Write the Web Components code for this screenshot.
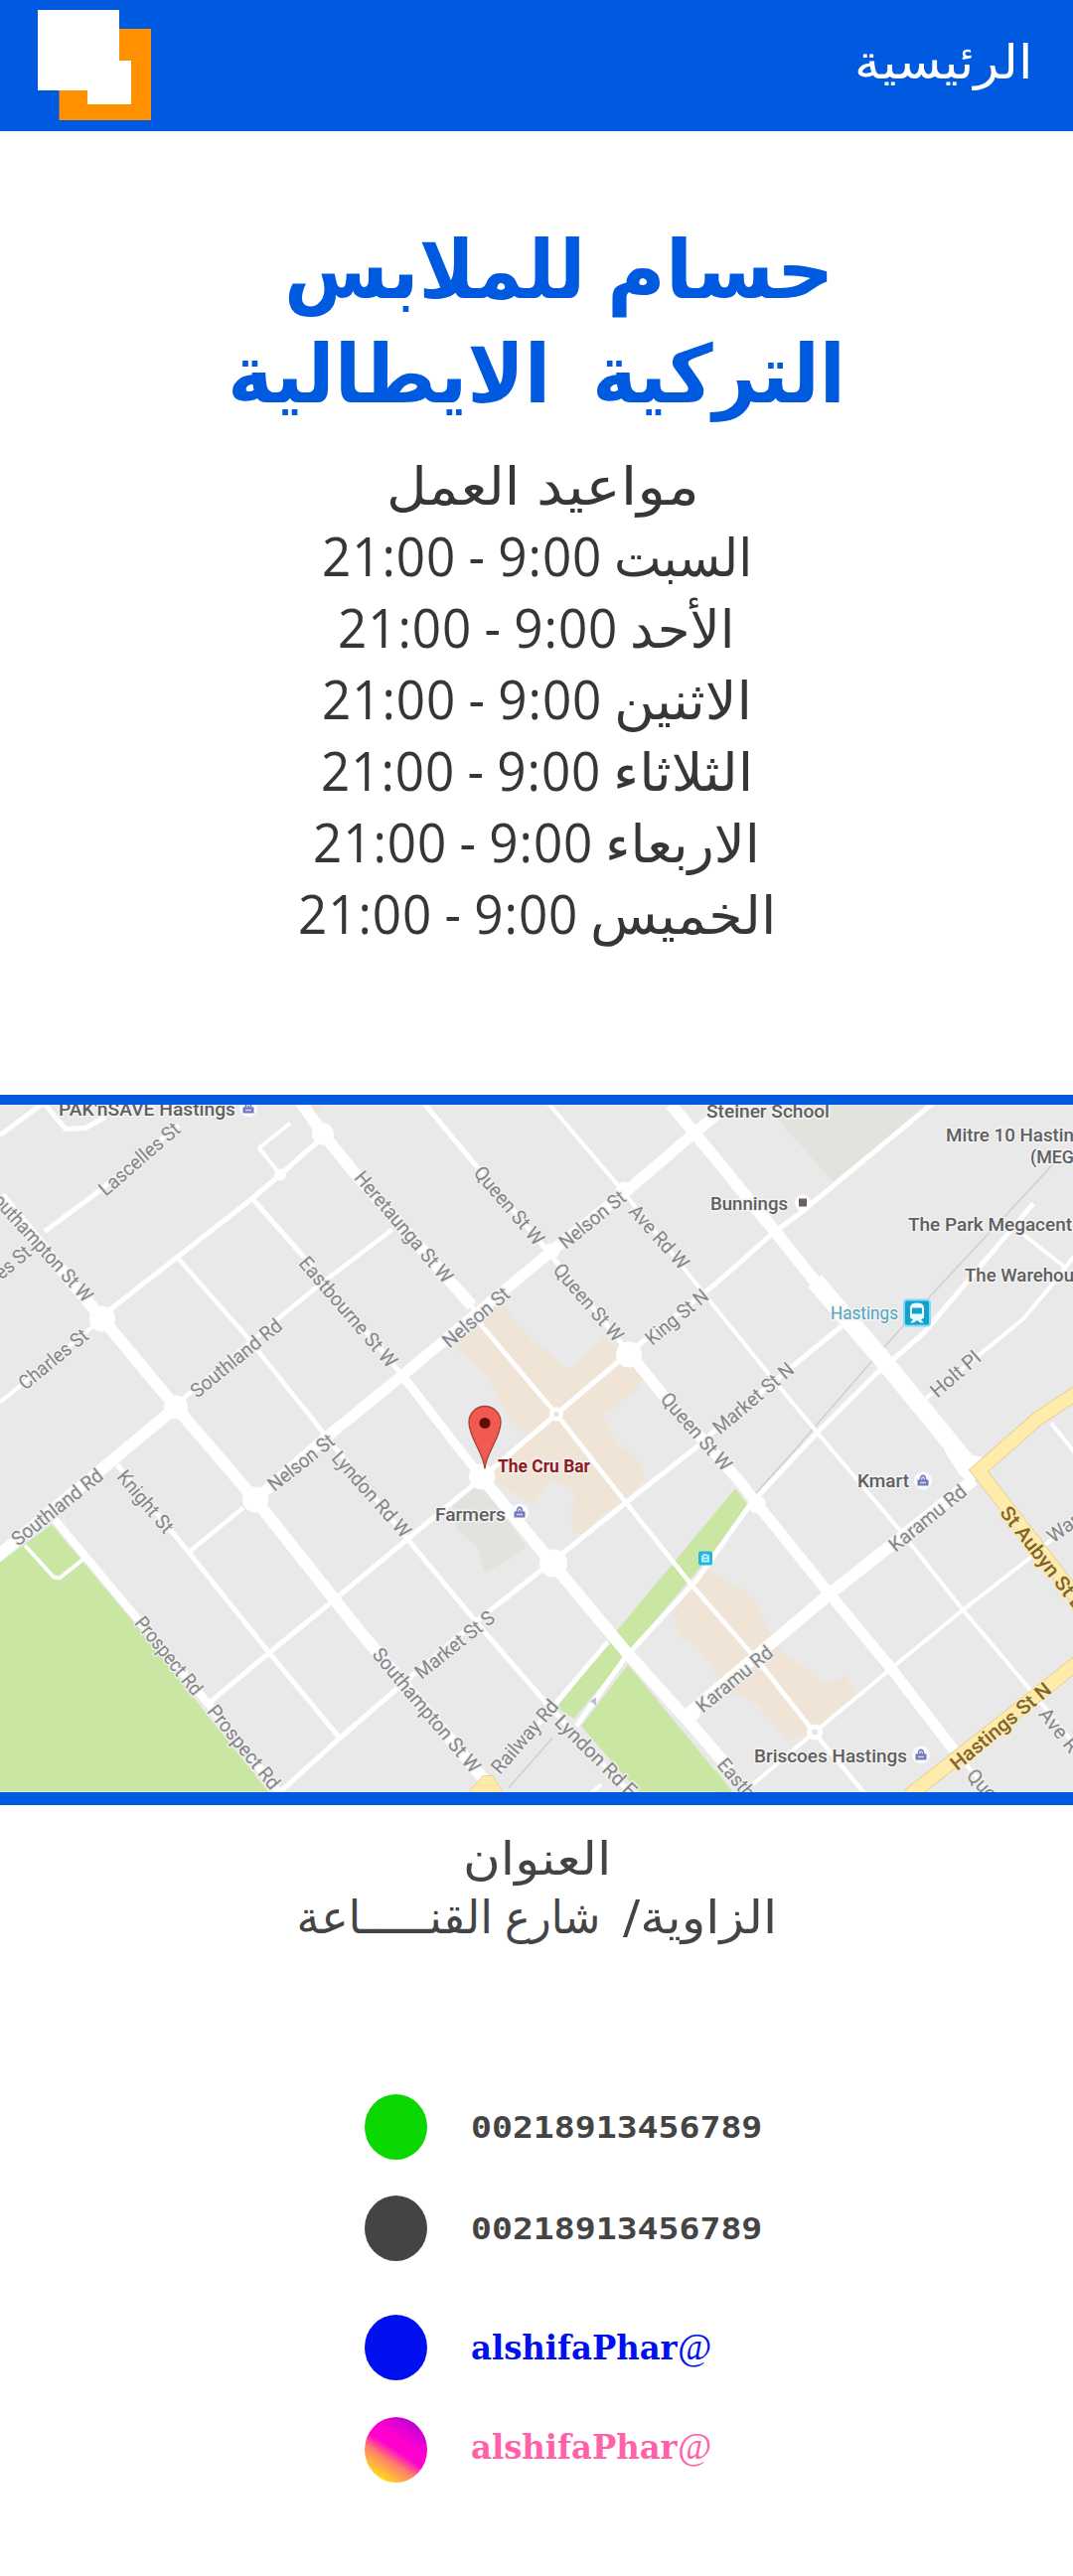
<!DOCTYPE html>
<html lang="ar">
<head>
<meta charset="utf-8">
<title>حسام للملابس</title>
<style>
html,body{margin:0;padding:0;background:#fff}
body{width:1080px;height:2593px;overflow:hidden;font-family:"DejaVu Sans",sans-serif}
</style>
</head>
<body>
<shop-page></shop-page>
<script>
/* One run of text, stretched or squeezed to a given width. */
class FitText extends HTMLElement{
  connectedCallback(){
    const w=+this.getAttribute('w');
    const r=this.attachShadow({mode:'open'});
    r.innerHTML=`<style>:host{display:block;width:${w}px;flex:none;white-space:nowrap;direction:ltr}
      span{display:inline-block;transform-origin:0 50%}</style><span><slot></slot></span>`;
    const s=r.querySelector('span');
    s.style.transform=`scaleX(${w/s.offsetWidth})`;
  }
}
customElements.define('fit-text',FitText);

class SiteHeader extends HTMLElement{
  constructor(){super();this.attachShadow({mode:'open'}).innerHTML=`
  <style>
   :host{display:flex;box-sizing:border-box;height:132px;background:#005ae0;justify-content:space-between;padding:10px 41px 0 38px;color:#fff}
   svg{display:block;width:114px;height:112px}
   .nav{font-size:48px;line-height:66px;padding-top:19px}
  </style>
  <svg viewBox="38 10 114 112"><path fill="#ff9100" d="M59.5 29H152v92H59.5z"/><path fill="#fff" d="M38 10h82v81H38z"/><path fill="#fff" d="M88 61h44v44H88z"/></svg>
  <div class="nav"><slot></slot></div>`}
}
customElements.define('site-header',SiteHeader);

class TextRow extends HTMLElement{
  constructor(){super();this.attachShadow({mode:'open'}).innerHTML=`
  <style>:host{display:flex;direction:rtl;justify-content:center;align-items:baseline;gap:var(--gap,12px);height:var(--pitch);line-height:var(--pitch)}</style><slot></slot>`}
}
customElements.define('text-row',TextRow);

class ContactRow extends HTMLElement{
  constructor(){super();this.attachShadow({mode:'open'}).innerHTML=`
  <style>
   :host{display:flex;align-items:center;height:66px;padding-left:367px;gap:44px}
   i{flex:none;width:63px;height:66px;border-radius:50%;background:var(--dot)}
   div{color:var(--ink);display:flex;align-items:baseline;padding-bottom:var(--lift,0px)}
  </style><i></i><div><slot></slot></div>`}
}
customElements.define('contact-row',ContactRow);

/* Street map. Each road: width, then its points. */
const ROADS=[
 [5,'0,1143 45,1110'],[5,'45,1112 66,1137 86,1136 106,1125'],
 [12,'0,1205 103,1328 177,1417 257,1510 360,1640 490,1795'],
 [5,'45,1240 95,1203 180,1133'],
 [5,'103,1325 255,1206 282,1183 325,1145'],[4,'282,1183 261,1156 292,1131'],
 [12,'300,1106 325,1142 360,1185 475,1315'],
 [4.5,'475,1315 485,1335 560,1424 630,1513 697,1597 765,1675 820,1745 872,1808'],
 [5,'255,1208 305,1265 405,1385'],[9,'405,1385 455,1450 485,1488'],
 [12,'485,1488 555,1573 630,1663 700,1741 735,1782'],
 [4.5,'180,1268 245,1342 325,1442'],[4.5,'180,1412 280,1328 320,1295 395,1238'],
 [4,'0,1412 103,1328'],[12,'-5,1569 177,1417'],
 [11,'257,1510 325,1450 405,1385 555,1260 630,1200 700,1140 740,1107'],
 [4.5,'245,1518 190,1563'],[5,'118,1475 190,1563 270,1663 342,1750'],
 [8,'55,1530 140,1632 210,1716 282,1806'],
 [5,'210,1715 270,1665 335,1612 410,1550 485,1488 560,1424 633,1362'],
 [5,'633,1362 720,1293 780,1240 805,1222 940,1110'],
 [5,'280,1806 342,1750 400,1700 480,1632 555,1573 630,1513 700,1458 720,1440 800,1374 850,1333'],
 [5,'426,1110 480,1175 553,1262 633,1362'],
 [11,'633,1362 670,1408 745,1492 760,1512 835,1605 897,1680 960,1762'],
 [4,'960,1762 997,1806'],
 [4,'551,1110 625,1197 708,1302 775,1385 823,1443 905,1540 970,1622 1040,1705 1082,1757'],
 [12,'675,1112 700,1142 780,1240 820,1290'],[18,'820,1290 885,1365 975,1475'],
 [12,'980,1490 835,1605 770,1660 690,1728'],
 [4,'1082,1530 1035,1570 968,1622 897,1680 820,1744 755,1799'],
 [5,'1040,1212 930,1342 900,1368 880,1385 825,1440 755,1515 702,1590 630,1668 580,1738'],
 [4,'932,1408 1030,1328 1062,1290 1082,1264'],[4,'1030,1243 1073,1277'],
 [5,'612,1653 500,1785'],[5,'325,1442 412,1552 485,1640 550,1715 635,1806'],
 [4,'1058,1433 1082,1463'],[4,'25,1556 54,1588 60,1589 85,1569'],[4,'592,1808 605,1797']];
const NODES=[[103,1328,13],[177,1417,12],[325,1142,11],[282,1183,6],[257,1510,13],[485,1487,13],[557,1574,14],[633,1364,13],[560,1424,7],[820,1744,8],[555,1260,8],[628,1198,8],[405,1385,6],[762,1515,9],[697,1725,8]];
/* Street labels: start and end of the centre line, text. */
const LABELS=[
 [102,1200,178,1134,'Lascelles St'],[-3,1205,90,1308,'outhampton St W'],[-3,1284,28,1258,'es St'],[21,1395,86,1342,'Charles St'],
 [194,1403,281,1332,'Southland Rd'],[305,1268,396,1374,'Eastbourne St W'],[361,1182,452,1289,'Heretaunga St W'],
 [481,1177,544,1251,'Queen St W'],[565,1253,627,1203,'Nelson St'],[637,1216,690,1275,'Ave Rd W'],[561,1275,624,1348,'Queen St W'],
 [448,1353,510,1300,'Nelson St'],[652,1350,710,1302,'King St N'],[669,1405,733,1478,'Queen St W'],[720,1440,796,1376,'Market St N'],
 [939,1403,984,1364,'Holt Pl'],[14,1552,101,1483,'Southland Rd'],[122,1483,171,1541,'Knight St'],[272,1497,334,1448,'Nelson St'],
 [338,1464,410,1545,'Lyndon Rd W'],[140,1630,200,1704,'Prospect Rd'],[213,1719,278,1799,'Prospect Rd'],[420,1686,495,1626,'Market St S'],
 [379,1662,480,1782,'Southampton St W'],[498,1783,558,1714,'Railway Rd'],[562,1730,638,1806,'Lyndon Rd E'],
 [703,1720,775,1661,'Karamu Rd'],[897,1558,970,1499,'Karamu Rd'],[726,1773,756,1808,'Easth'],[977,1784,1000,1809,'Que'],
 [1050,1722,1082,1762,'Ave R'],[1056,1549,1084,1528,'War'],
 [1011,1519,1088,1618,'St Aubyn St E','y'],[959,1778,1055,1698,'Hastings St N','y']];
const PLACES=[[59,237,1123,"PAK'nSAVE Hastings"],[711,835,1125,'Steiner School'],[715,793,1218,'Bunnings'],[952,1081,1149,'Mitre 10 Hastin'],
 [1037,1081,1171,'(MEG'],[914,1079,1239,'The Park Megacent'],[971,1081,1290,'The Warehou'],[836,904,1328,'Hastings','t'],
 [863,915,1497,'Kmart'],[759,913,1774,'Briscoes Hastings'],[438,509,1531,'Farmers'],[501,594,1482,'The Cru Bar','r']];
const SHOPS=[[250,1116],[523,1523],[929,1491],[927,1767]];
class StreetMap extends HTMLElement{
  constructor(){
    super();
    const road=([w,p])=>`<polyline points="${p}" stroke-width="${w}"/>`;
    const label=([a,b,c,d,t,k])=>{
      const L=Math.hypot(c-a,d-b),g=Math.atan2(d-b,c-a)*180/Math.PI;
      return `<text class="st ${k||''}" transform="translate(${a} ${b}) rotate(${g})" y="7" textLength="${L}" lengthAdjust="spacingAndGlyphs">${t}</text>`};
    const place=([a,b,y,t,k])=>`<text class="pl ${k||''}" x="${a}" y="${y}" textLength="${b-a}" lengthAdjust="spacingAndGlyphs">${t}</text>`;
    const shop=([x,y])=>`<g transform="translate(${x} ${y})"><circle r="9" fill="#fbfbff"/><path fill="#7478bb" d="M-5.5 5V-1H-3.5Q-3-6 0-6T3.5-1H5.5V5z"/><path stroke="#d5d7f2" stroke-width="1.3" fill="none" d="M-1.5-1Q-1.5-3.5 0-3.5T1.5-1M-3 2H3"/></g>`;
    this.attachShadow({mode:'open'}).innerHTML=`
    <style>
     :host{display:block;border-top:10.5px solid #005ae0;border-bottom:13px solid #005ae0}
     svg{display:block;width:1080px;height:691.5px;background:#e9e9e9}
     text{font-family:Roboto,sans-serif;paint-order:stroke;stroke-linejoin:round}
     .st{font-size:20px;fill:#858585;stroke:#efefef;stroke-width:3px}
     .pl{font-size:19px;fill:#606060;stroke:#f3f3f3;stroke-width:3px;font-weight:500}
     .y{fill:#806431;stroke:#ffeba9;font-weight:500}
     .t{fill:#55a3bc;font-weight:400}.r{fill:#8e1a22;font-weight:700}
    </style>
    <svg viewBox="0 1112.5 1080 691.5">
     <g fill="#cae6a3">
      <path d="M0 1573L52 1535L140 1640L270 1804H0z"/>
      <path d="M740 1499L755 1518L720 1560L640 1655L578 1730L560 1720L620 1643z"/>
      <path d="M632 1676L585 1738L642 1804H737z"/><path d="M720 1782L737 1804H720z"/>
     </g>
     <g fill="#f0e4d6">
      <path d="M458 1356L505 1312L535 1350L548 1357L568 1377L576 1377L609 1346L648 1387L638 1402L607 1425L620 1452L645 1473L648 1490L632 1508L600 1530L592 1547L577 1542L574 1527L580 1502L555 1490L536 1515L500 1492L494 1476L534 1448L512 1428L490 1385z"/>
      <path d="M713 1580L758 1608L774 1642L790 1665L830 1695L850 1688L862 1704L820 1743L793 1753L780 1738L762 1715L735 1704L705 1662L682 1645L678 1625L692 1600z"/>
      <path d="M305 1112H325L318 1122z"/>
     </g>
     <path fill="#e2e3dc" d="M455 1512L485 1492L530 1558L488 1584L480 1558L460 1540zM775 1112H938L838 1190L782 1126z"/>
     <g fill="none" stroke="#cfcfcf" stroke-width="1.5"><path d="M1065 1167L930 1312L885 1362L800 1460L757 1508M556 1750L512 1800"/></g>
     <g fill="none" stroke="#fff" stroke-linejoin="round">${ROADS.map(road).join('')}</g>
     <g fill="#fff">${NODES.map(([x,y,r])=>`<circle cx="${x}" cy="${y}" r="${r}"/>`).join('')}<path d="M950 1460L993 1468L978 1496L965 1484z"/></g>
     <circle cx="560" cy="1424" r="2.5" fill="#e6e2da"/><circle cx="820" cy="1744" r="3" fill="#e6e6e6"/>
     <g fill="none" stroke-linejoin="miter">
      <path stroke="#e6d29a" stroke-width="15" d="M1085 1402L1045 1428L985 1481L1088 1614M1090 1670L915 1808"/>
      <path stroke="#ffebaa" stroke-width="13" d="M1085 1402L1045 1428L985 1481L1088 1614M1090 1670L915 1808"/>
     </g>
     <path fill="#ffe9a8" stroke="#e6d29a" d="M470 1806L486 1788H496L507 1806z"/>
     ${LABELS.map(label).join('')}${SHOPS.map(shop).join('')}
     <circle cx="808" cy="1211" r="8" fill="#fff"/><path fill="#6c5f5f" d="M804 1207h8v8h-8z"/>
     ${PLACES.map(place).join('')}
     <path fill="#8b8fd0" opacity=".6" d="M594 1713l6-4v8z"/>
     <g><rect x="909" y="1308" width="28" height="28" rx="4" fill="#7fdcff"/><rect x="911" y="1310" width="24" height="24" rx="2" fill="#159fcb"/>
      <path fill="#e8fbff" d="M916 1327V1317Q916 1312 923 1312T930 1317V1327L927 1329L930 1332H926L924 1330H922L920 1332H916L919 1329z"/><path fill="#159fcb" d="M918 1317h10v6h-10z"/></g>
     <g><rect x="703" y="1562" width="14" height="14" rx="2" fill="#24b5dc"/><path fill="none" stroke="#b9f2ff" stroke-width="1.8" d="M707 1572v-5q3-3 6 0v5zM707 1569h6"/></g>
     <path fill="#f05a50" stroke="#a8433e" stroke-width="1.4" d="M488 1479C487 1463 472 1448 472 1432A16 16 0 0 1 504 1432C504 1448 489 1463 488 1479z"/>
     <circle cx="488" cy="1433" r="5.5" fill="#640b08"/>
    </svg>`}
}
customElements.define('street-map',StreetMap);

class ShopPage extends HTMLElement{
  constructor(){
    super();
    const D='<fit-text class="d" w="282">21:00 - 9:00</fit-text>';
    const days=[[139,'السبت'],[106,'الأحد'],[139,'الاثنين'],[141,'الثلاثاء'],[156,'الاربعاء'],[187,'الخميس']];
    const phone='<fit-text class="n" w="293">00218913456789</fit-text>';
    const user='<fit-text class="u" w="208">alshifaPhar</fit-text><fit-text class="at" w="34">@</fit-text>';
    this.attachShadow({mode:'open'}).innerHTML=`
    <style>
     :host{display:flex;flex-direction:column;width:1080px}
     h1{margin:88px 0 0;font-size:81px;font-weight:700;color:#005ae0;--pitch:105px}
     h1 text-row:first-child{--gap:22px;padding-left:45px}
     h1 text-row:last-child{--gap:42px}
     .hours{margin-top:24px;height:504px;font-size:53px;color:#363636;--pitch:72px}
     .hours>text-row:first-child{--gap:17px;padding-left:13px}
     .d{font-family:"Open Sans";font-size:55px;line-height:66px;word-spacing:-2px;letter-spacing:1px}
     street-map{margin-top:144px}
     .addr{margin-top:25px;font-size:46px;color:#444;--pitch:59px}
     .addr text-row:last-child{--gap:0px}
     .s1{margin-left:23px}.s2{margin-left:12px}
     .contacts{margin-top:148px;display:flex;flex-direction:column}
     .n{font:700 31px/66px "DejaVu Sans Mono",monospace}
     .u{font:700 34px/60px "DejaVu Serif",serif}
     .at{font:italic 37px/60px "Liberation Serif",serif}
    </style>
    <site-header><fit-text w="179">الرئيسية</fit-text></site-header>
    <h1><text-row><fit-text w="229">حسام</fit-text><fit-text w="303">للملابس</fit-text></text-row>
    <text-row><fit-text w="255">التركية</fit-text><fit-text w="325">الايطالية</fit-text></text-row></h1>
    <div class="hours"><text-row><fit-text w="164">مواعيد</fit-text><fit-text w="134">العمل</fit-text></text-row>
    ${days.map(([w,t])=>`<text-row><fit-text w="${w}">${t}</fit-text>${D}</text-row>`).join('')}</div>
    <street-map></street-map>
    <div class="addr"><text-row><fit-text w="149">العنوان</fit-text></text-row>
    <text-row><fit-text class="s1" dir="rtl" w="155"><bdo dir="rtl" style="unicode-bidi:isolate">الزاوية/</bdo></fit-text><fit-text class="s2" w="96">شارع</fit-text><fit-text w="197">القنـــــاعة</fit-text></text-row></div>
    <div class="contacts">
     <contact-row style="--dot:#0ad800;--ink:#444">${phone}</contact-row>
     <contact-row style="--dot:#444;--ink:#444;margin-top:36px">${phone}</contact-row>
     <contact-row style="--dot:#0010ee;--ink:#0010ee;margin-top:54px">${user}</contact-row>
     <contact-row style="--dot:linear-gradient(33deg,#ffe21a 12%,#ff7d6c 36%,#ff00cf 50%,#ff00cf 62%,#b000d8 94%);--ink:#ff62a8;--lift:5px;margin-top:37px">${user}</contact-row>
    </div>`}
}
customElements.define('shop-page',ShopPage);
</script>
</body>
</html>
